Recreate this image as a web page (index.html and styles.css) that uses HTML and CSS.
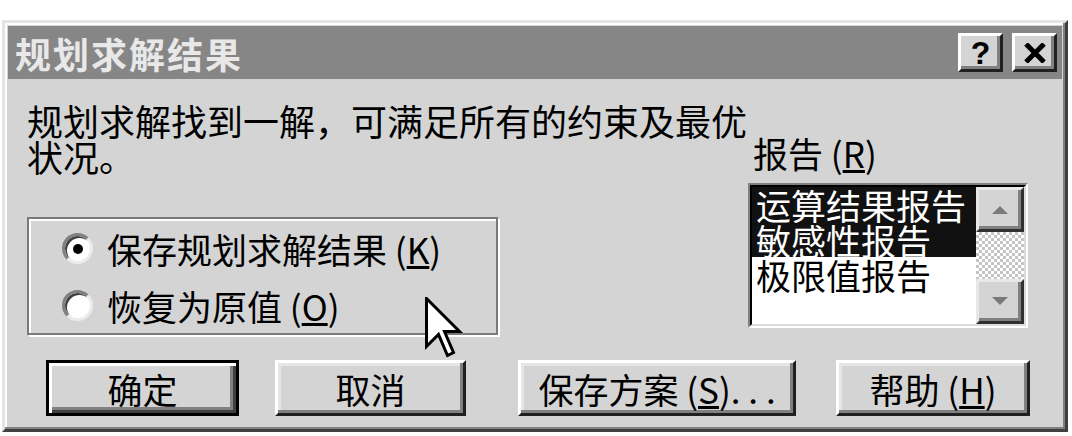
FILE: index.html
```html
<!DOCTYPE html>
<html lang="zh-CN">
<head>
    <meta charset="UTF-8">
    <title>规划求解结果</title>
    <link rel="stylesheet" href="styles.css">
</head>
<body>
    <div class="dialog">
        <div class="titlebar">
            <span class="title">规划求解结果</span>
            <div class="title-buttons">
                <span class="tbtn help">?</span>
                <span class="tbtn">
                    <svg width="24" height="20" viewBox="0 0 24 20">
                        <path d="M3 1 L21 19 M21 1 L3 19" stroke="#000" stroke-width="5" fill="none"/>
                    </svg>
                </span>
            </div>
        </div>

        <div class="content">
            <div class="main-row">
                <div class="left-col">
                    <p class="message">规划求解找到一解，可满足所有的约束及最优状况。</p>
                    <div class="group">
                        <label class="radio-row"><span class="radio checked"></span><span>保存规划求解结果 (<u>K</u>)</span></label>
                        <label class="radio-row"><span class="radio"></span><span>恢复为原值 (<u>O</u>)</span></label>
                    </div>
                </div>

                <div class="right-col">
                    <div class="list-label">报告 (<u>R</u>)</div>
                    <div class="listbox">
                        <div class="listbox-inner">
                            <ul class="items">
                                <li class="selected">运算结果报告</li>
                                <li class="selected">敏感性报告</li>
                                <li>极限值报告</li>
                            </ul>
                            <div class="scrollbar">
                                <div class="sb-btn">
                                    <svg width="16" height="9" viewBox="0 0 16 9"><polygon points="0,9 8,1 16,9" fill="#7a7a7a"/></svg>
                                </div>
                                <div class="sb-track"></div>
                                <div class="sb-btn">
                                    <svg width="16" height="9" viewBox="0 0 16 9"><polygon points="0,0 16,0 8,8" fill="#7a7a7a"/></svg>
                                </div>
                            </div>
                        </div>
                    </div>
                </div>
            </div>

            <!-- botones de acción -->
            <div class="buttons">
                <button class="btn default btn-ok">确定</button>
                <button class="btn btn-cancel">取消</button>
                <button class="btn btn-save">保存方案 (<u>S</u>). . .</button>
                <button class="btn btn-help">帮助 (<u>H</u>)</button>
            </div>
        </div>

        <svg class="cursor" width="39" height="63" viewBox="-0.5 -0.5 13 21">
            <path d="M0 0 V16 L4 12 L7 19 L9 18 L6 11 H11 Z" fill="#fff" stroke="#000" stroke-width="1" stroke-linejoin="miter"/>
        </svg>
    </div>
</body>
</html>
```

FILE: styles.css
```css
body {
    margin: 0;
    background: #fff;
    font-family: "Noto Sans CJK SC", sans-serif;
    color: #000;
}
.dialog {
    position: relative;
    box-sizing: border-box;
    width: 1066px;
    height: 412px;
    margin: 20px 0 0 2px;
    padding: 3px;
    background: #d4d4d4;
    border: 3px solid;
    border-color: #e4e4e4 #404040 #404040 #e4e4e4;
    box-shadow: inset -2px -2px #808080, inset 2px 2px #fff;
}
.titlebar {
    display: flex;
    align-items: center;
    justify-content: space-between;
    height: 53px;
    padding: 0 5px 0 7px;
    background: #868686;
}
.title {
    color: #e8e8e8;
    font-weight: 700;
    font-size: 36px;
    line-height: 1;
    letter-spacing: 2px;
}
.title-buttons {
    display: flex;
    gap: 9px;
}
.tbtn {
    display: flex;
    align-items: center;
    justify-content: center;
    box-sizing: border-box;
    width: 45px;
    height: 39px;
    background: #d4d4d4;
    border: 3px solid;
    border-color: #fff #202020 #202020 #fff;
    box-shadow: inset -3px -3px #808080;
}
.tbtn.help {
    font-family: "Liberation Sans", sans-serif;
    font-weight: 700;
    font-size: 32px;
    line-height: 1;
}
.content {
    padding: 23px 0 0 19px;
}
.main-row {
    display: flex;
}
.left-col {
    width: 721px;
}
.message {
    width: 730px;
    margin: 0;
    font-size: 36px;
    line-height: 36px;
}
.group {
    box-sizing: border-box;
    width: 471px;
    height: 118px;
    margin-top: 43px;
    padding: 12px 0 0 33px;
    border: 2px solid #7a7a7a;
    box-shadow: inset 2px 2px #fff, 2px 2px #fff;
    display: flex;
    flex-direction: column;
    gap: 22px;
}
.radio-row {
    display: flex;
    align-items: center;
    gap: 14px;
    font-size: 35px;
    line-height: 35px;
}
.radio {
    position: relative;
    box-sizing: border-box;
    width: 31px;
    height: 31px;
    border-radius: 50%;
    background: #fff;
    border: 3px solid;
    border-color: #808080 #ececec #ececec #808080;
    box-shadow: inset 2px 2px #404040;
}
.radio.checked::after {
    content: "";
    position: absolute;
    left: 50%;
    top: 50%;
    width: 10px;
    height: 10px;
    border-radius: 50%;
    background: #000;
    transform: translate(-50%, -50%);
}
.right-col {
    width: 280px;
}
.list-label {
    margin: 33px 0 13px 5px;
    font-size: 35px;
    line-height: 35px;
}
.listbox {
    box-sizing: border-box;
    height: 145px;
    border: 2px solid;
    border-color: #808080 #fff #fff #808080;
}
.listbox-inner {
    display: flex;
    height: 100%;
    box-sizing: border-box;
    background: #fff;
    border: 2px solid;
    border-color: #000 #dcdcdc #dcdcdc #000;
}
.items {
    flex: 1;
    margin: 0;
    padding: 0;
    list-style: none;
    font-size: 35px;
    line-height: 35px;
}
.items li {
    padding-left: 4px;
}
.items li.selected {
    background: #111;
    color: #fff;
}
.scrollbar {
    display: flex;
    flex-direction: column;
    width: 48px;
}
.sb-btn {
    display: flex;
    align-items: center;
    justify-content: center;
    box-sizing: border-box;
    height: 45px;
    background: #d4d4d4;
    border: 3px solid;
    border-color: #e8e8e8 #303030 #303030 #e8e8e8;
    box-shadow: inset -3px -3px #808080;
}
.sb-track {
    flex: 1;
    background: #fff repeating-conic-gradient(#c4c4c4 0 25%, #fff 0 50%) 0 0 / 6px 6px;
}
.buttons {
    display: flex;
    margin-top: 25px;
}
.btn {
    box-sizing: border-box;
    height: 56px;
    padding: 0;
    font-family: inherit;
    font-size: 35px;
    line-height: 1;
    color: #000;
    background: #d4d4d4;
    border: 3px solid;
    border-color: #fff #202020 #202020 #fff;
    box-shadow: inset -3px -3px #808080, inset 3px 3px #e6e6e6;
}
.btn.default {
    border-color: #000;
    box-shadow: inset 3px 3px #fff, inset -3px -3px #404040, inset -6px -6px #808080;
}
.btn-ok { width: 193px; margin-left: 19px; }
.btn-cancel { width: 191px; margin-left: 36px; }
.btn-save { width: 278px; margin-left: 52px; }
.btn-help { width: 194px; margin-left: 40px; }
.cursor {
    position: absolute;
    left: 420px;
    top: 274px;
}
```
